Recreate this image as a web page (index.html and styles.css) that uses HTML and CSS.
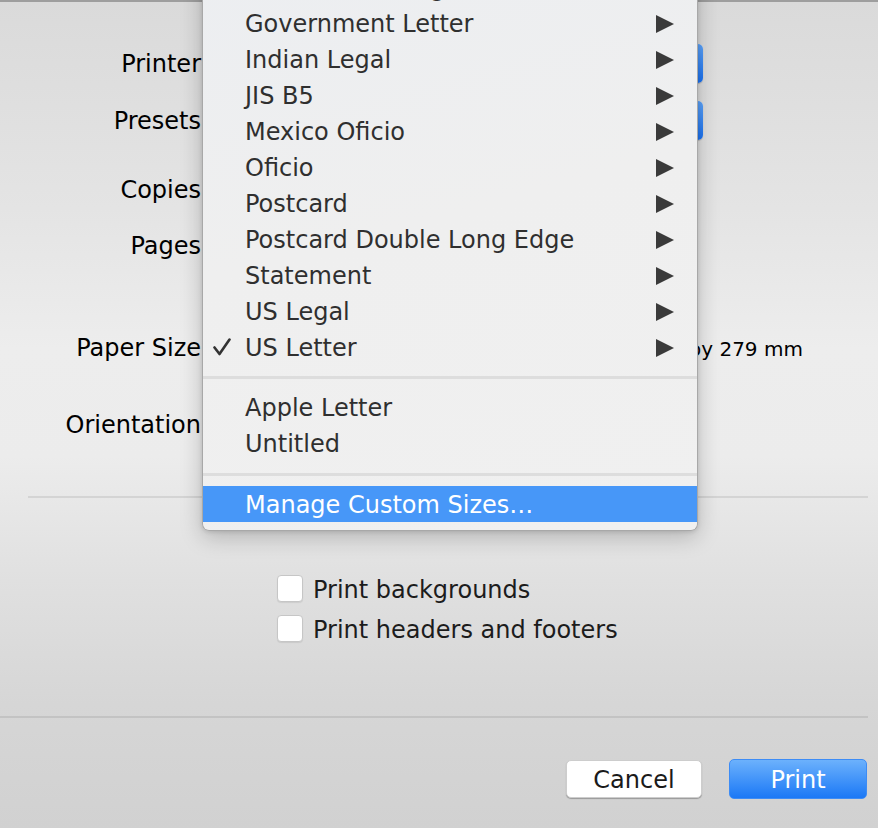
FILE: index.html
```html
<!DOCTYPE html>
<html lang="en">
<head>
<meta charset="utf-8">
<title>Print</title>
<link rel="stylesheet" href="styles.css">
</head>
<body>
<div class="dialog">
  <div class="form">
    <div class="row r-printer">
      <span class="label">Printer</span>
      <div class="popup popup-wide"><span class="cap"></span></div>
    </div>
    <div class="row r-presets">
      <span class="label">Presets</span>
      <div class="popup popup-wide"><span class="cap"></span></div>
    </div>
    <div class="row r-copies">
      <span class="label">Copies</span>
    </div>
    <div class="row r-pages">
      <span class="label">Pages</span>
    </div>
    <div class="row r-paper">
      <span class="label">Paper Size</span>
      <div class="popup popup-paper"><span class="cap"></span></div>
      <span class="dims">216 by 279 mm</span>
    </div>
    <div class="row r-orient">
      <span class="label">Orientation</span>
    </div>
  </div>

  <div class="rule rule-inset"></div>

  <div class="options">
    <div class="check"><span class="box"></span><span class="check-text">Print backgrounds</span></div>
    <div class="check"><span class="box"></span><span class="check-text">Print headers and footers</span></div>
  </div>

  <div class="rule rule-full"></div>

  <div class="buttons">
    <div class="btn btn-cancel">Cancel</div>
    <div class="btn btn-print">Print</div>
  </div>

  <div class="menu">
    <div class="item">Government Legal<svg class="arrow" viewBox="0 0 18 18"><polygon points="0,0 18,9 0,18"/></svg></div>
    <div class="item">Government Letter<svg class="arrow" viewBox="0 0 18 18"><polygon points="0,0 18,9 0,18"/></svg></div>
    <div class="item">Indian Legal<svg class="arrow" viewBox="0 0 18 18"><polygon points="0,0 18,9 0,18"/></svg></div>
    <div class="item">JIS B5<svg class="arrow" viewBox="0 0 18 18"><polygon points="0,0 18,9 0,18"/></svg></div>
    <div class="item">Mexico Oficio<svg class="arrow" viewBox="0 0 18 18"><polygon points="0,0 18,9 0,18"/></svg></div>
    <div class="item">Oficio<svg class="arrow" viewBox="0 0 18 18"><polygon points="0,0 18,9 0,18"/></svg></div>
    <div class="item">Postcard<svg class="arrow" viewBox="0 0 18 18"><polygon points="0,0 18,9 0,18"/></svg></div>
    <div class="item">Postcard Double Long Edge<svg class="arrow" viewBox="0 0 18 18"><polygon points="0,0 18,9 0,18"/></svg></div>
    <div class="item">Statement<svg class="arrow" viewBox="0 0 18 18"><polygon points="0,0 18,9 0,18"/></svg></div>
    <div class="item">US Legal<svg class="arrow" viewBox="0 0 18 18"><polygon points="0,0 18,9 0,18"/></svg></div>
    <div class="item checked"><svg class="tick" viewBox="0 0 18 18"><path d="M1.5 9.5 L6.5 16 L16.5 1.5"/></svg>US Letter<svg class="arrow" viewBox="0 0 18 18"><polygon points="0,0 18,9 0,18"/></svg></div>
    <div class="sep sep-a"></div>
    <div class="item">Apple Letter</div>
    <div class="item">Untitled</div>
    <div class="sep sep-b"></div>
    <div class="item active">Manage Custom Sizes…</div>
  </div>
</div>
</body>
</html>
```

FILE: styles.css
```css
* { box-sizing: border-box; }

html, body {
  margin: 0;
  padding: 0;
}

body {
  font-family: "DejaVu Sans", "Noto Sans", sans-serif;
  font-size: 24px;
  color: #000;
  overflow: hidden;
}

.dialog {
  position: relative;
  width: 878px;
  height: 828px;
  border-top: 2px solid #9e9e9e;
  background: linear-gradient(to bottom, #dadada 0%, #e4e4e4 25%, #ededed 42%, #ececec 55%, #e0e0e0 70%, #d6d6d6 85%, #d1d1d1 100%);
}

/* ---------- form ---------- */
.form {
  display: flex;
  flex-direction: column;
  padding-top: 42px;
}

.row {
  display: flex;
  align-items: center;
  height: 40px;
}

.r-presets { margin-top: 17px; }
.r-copies { margin-top: 29px; }
.r-pages { margin-top: 16px; }
.r-paper { margin-top: 62px; }
.r-orient { margin-top: 37px; }

.label {
  width: 202px;
  padding-right: 1px;
  text-align: right;
  line-height: 40px;
  flex: none;
}

.popup {
  position: relative;
  height: 39px;
  margin-left: 10px;
  margin-top: -2px;
  background: #fff;
  border-radius: 5px;
  box-shadow: 0 1px 1px rgba(0, 0, 0, 0.2);
}

.popup-wide { width: 491px; }
.popup-paper { width: 400px; }

.cap {
  position: absolute;
  right: 0;
  top: 0;
  bottom: 0;
  width: 26px;
  border-radius: 0 5px 5px 0;
  background: linear-gradient(to bottom, #5da4fb, #1a72f3);
}

.dims {
  margin-left: 32px;
  padding-top: 2px;
  font-size: 20px;
  color: #000;
}

/* ---------- rules ---------- */
.rule {
  height: 2px;
}

.rule-inset {
  margin: 51px 10px 0 28px;
  background: #d4d4d4;
}

.rule-full {
  margin: 74px 10px 0 0;
  background: #c3c3c3;
}

/* ---------- checkboxes ---------- */
.options {
  display: flex;
  flex-direction: column;
  gap: 12px;
  margin-top: 76px;
  padding-left: 277px;
}

.check {
  display: flex;
  align-items: center;
  gap: 10px;
  height: 28px;
  color: #1c1c1c;
}

.check-text {
  padding-top: 3px;
}

.box {
  width: 26px;
  height: 27px;
  background: #fff;
  border: 1px solid #c6c6c6;
  border-radius: 4px;
  box-shadow: 0 1px 1px rgba(0, 0, 0, 0.08);
}

/* ---------- buttons ---------- */
.buttons {
  display: flex;
  justify-content: flex-end;
  align-items: center;
  gap: 27px;
  margin-top: 41px;
  padding-right: 11px;
}

.btn {
  display: flex;
  align-items: center;
  justify-content: center;
  padding-top: 2px;
  border-radius: 5px;
}

.btn-cancel {
  width: 136px;
  height: 38px;
  background: #fff;
  color: #1a1a1a;
  border: 1px solid #cdcdcd;
  box-shadow: 0 1px 1px rgba(0, 0, 0, 0.28);
}

.btn-print {
  width: 138px;
  height: 40px;
  color: #fff;
  background: linear-gradient(to bottom, #6cb1fc, #1b78f6);
  border: 1px solid #3d8cf5;
}

/* ---------- dropdown menu ---------- */
.menu {
  position: absolute;
  left: 202px;
  top: -33px;
  width: 496px;
  padding-bottom: 8px;
  background: linear-gradient(165deg, #eceef1 0%, #efefef 45%, #f0f0f0 100%);
  border: 1px solid #a8a8a8;
  border-top: none;
  border-radius: 0 0 7px 7px;
  box-shadow: 0 6px 22px rgba(0, 0, 0, 0.22), 0 1px 4px rgba(0, 0, 0, 0.12);
  color: #2f2f2f;
  z-index: 10;
}

.item {
  position: relative;
  display: flex;
  align-items: center;
  height: 36px;
  padding-left: 42px;
  padding-top: 1px;
  white-space: nowrap;
}

.arrow {
  position: absolute;
  right: 23px;
  top: 10px;
  width: 18px;
  height: 18px;
  fill: #3a3a3a;
}

.tick {
  position: absolute;
  left: 10px;
  top: 9px;
  width: 18px;
  height: 18px;
  fill: none;
  stroke: #333;
  stroke-width: 2.6;
  stroke-linecap: round;
  stroke-linejoin: round;
}

.sep {
  border-top: 3px solid #dddddd;
}

.sep-a {
  margin: 11px 0 10px;
}

.sep-b {
  margin: 12px 0 10px;
}

.item.active {
  background: #4797f8;
  color: #fff;
}
```
